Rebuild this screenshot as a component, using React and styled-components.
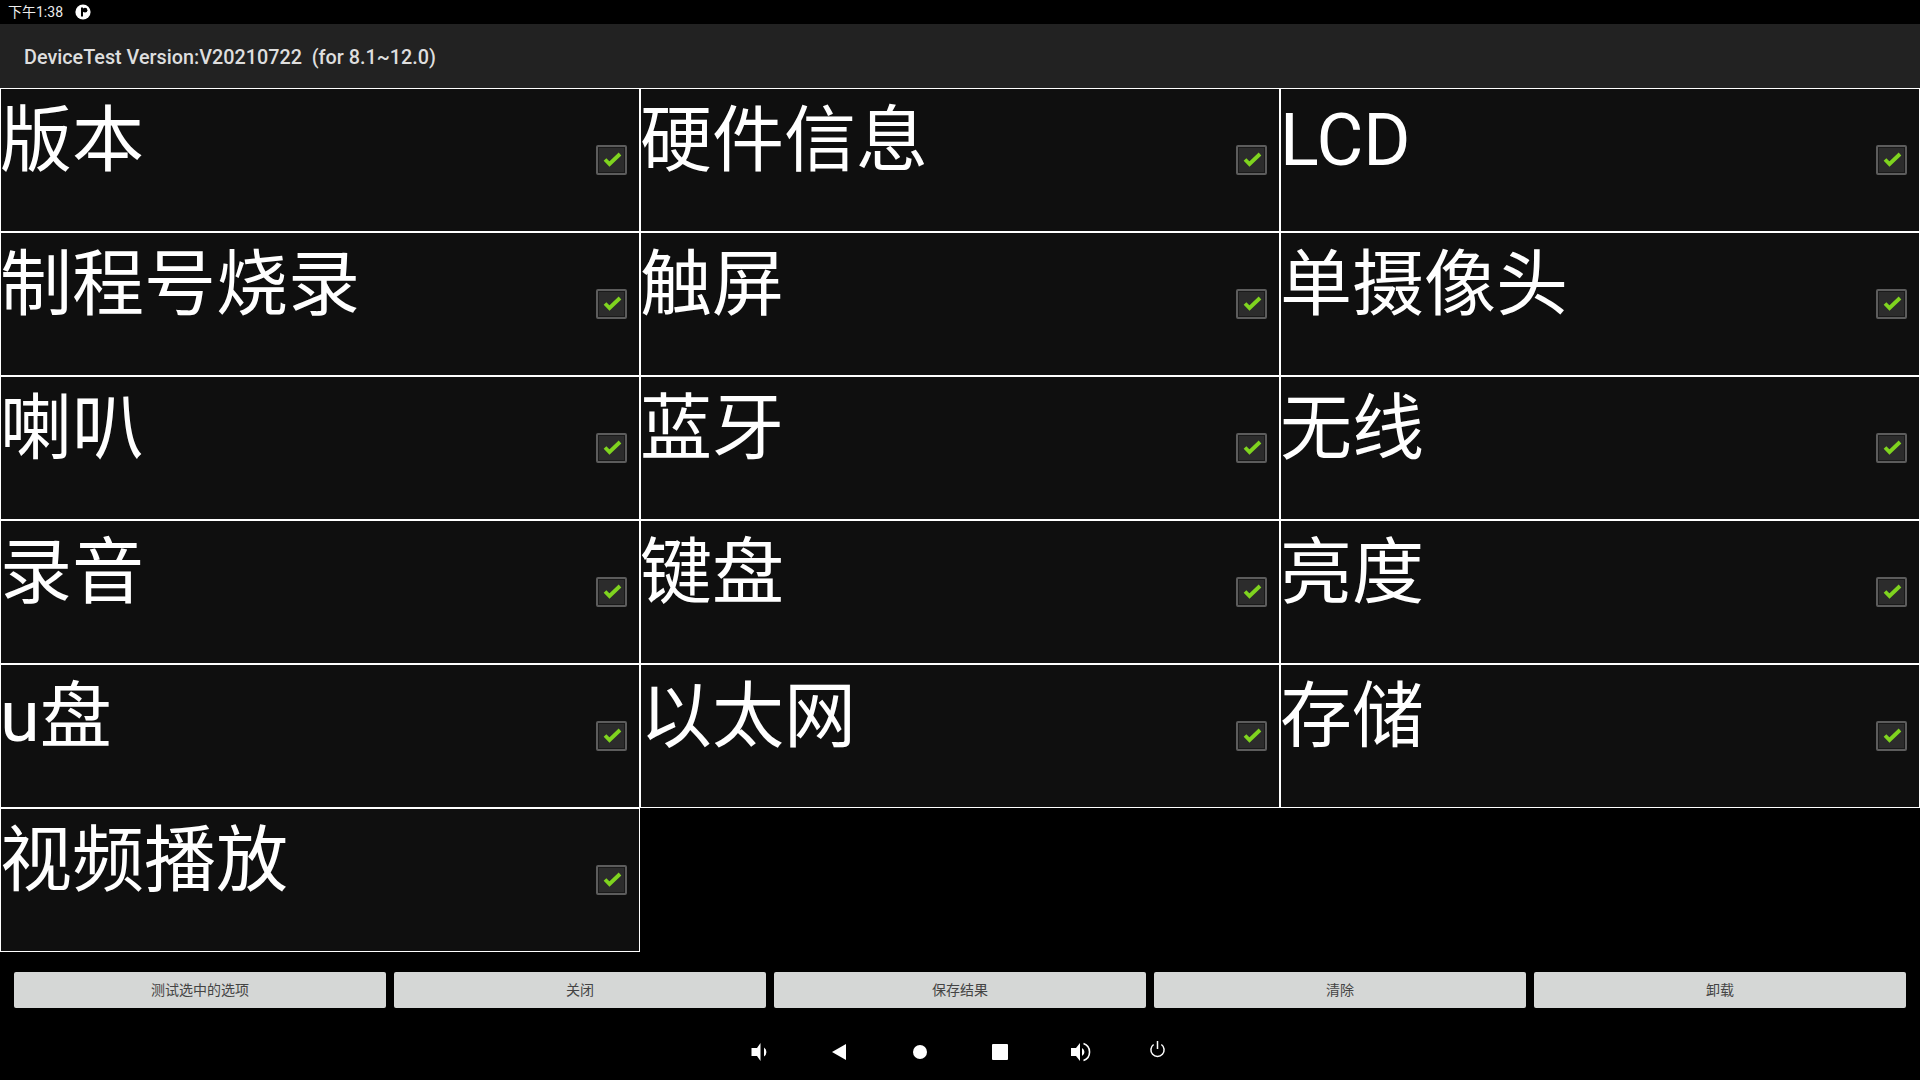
import styled, { createGlobalStyle } from 'styled-components';

const items = [
  '版本', '硬件信息', 'LCD',
  '制程号烧录', '触屏', '单摄像头',
  '喇叭', '蓝牙', '无线',
  '录音', '键盘', '亮度',
  'u盘', '以太网', '存储',
  '视频播放',
];

const actions = ['测试选中的选项', '关闭', '保存结果', '清除', '卸载'];

function App() {
  return (
    <Screen>
      <GlobalStyle />
      <StatusBar>
        <StatusTime>下午1:38</StatusTime>
        <svg width="16" height="16" viewBox="0 0 16 16">
          <circle cx="8" cy="8" r="7.6" fill="#fff" />
          <path d="M7 3.5v9" stroke="#000" strokeWidth="2" />
          <circle cx="10" cy="6.2" r="2.4" fill="#000" />
        </svg>
      </StatusBar>
      <TitleBar>{'DeviceTest Version:V20210722  (for 8.1~12.0)'}</TitleBar>
      <TestGrid>
        {items.map((name) => (
          <TestCell key={name}>
            <TestName>{name}</TestName>
            <CheckBox>
              <svg width="20" height="16" viewBox="0 0 20 16">
                <path d="M3 7.5L7.5 12L18 2" fill="none" stroke="#7fd41f" strokeWidth="3.8" />
              </svg>
            </CheckBox>
          </TestCell>
        ))}
      </TestGrid>
      <ActionRow>
        {actions.map((label) => (
          <ActionButton key={label}>{label}</ActionButton>
        ))}
      </ActionRow>
      <NavBar>
        <NavSlot>
          <svg width="24" height="24" viewBox="0 0 24 24" fill="#fff">
            <path d="M3.5 8H9L12.5 3v18L9 16H3.5z" />
            <path d="M16 7.5a5.4 5.4 0 0 1 0 9z" />
          </svg>
        </NavSlot>
        <NavSlot>
          <svg width="24" height="24" viewBox="0 0 24 24" fill="#fff">
            <path d="M4 12L18 4v16z" />
          </svg>
        </NavSlot>
        <NavSlot>
          <svg width="24" height="24" viewBox="0 0 24 24" fill="#fff">
            <circle cx="12" cy="12" r="7" />
          </svg>
        </NavSlot>
        <NavSlot>
          <svg width="24" height="24" viewBox="0 0 24 24" fill="#fff">
            <rect x="4" y="4" width="16" height="16" rx="1" />
          </svg>
        </NavSlot>
        <NavSlot>
          <svg width="24" height="24" viewBox="0 0 24 24" fill="#fff">
            <path d="M3 8h5L12 3v18l-4-5H3z" />
            <path d="M14 8a4.5 4.5 0 0 1 0 8z" />
            <path d="M15.5 3.5a9 9 0 0 1 0 17" fill="none" stroke="#fff" strokeWidth="1.6" />
          </svg>
        </NavSlot>
        <NavSlot>
          <svg width="24" height="24" viewBox="0 0 24 24" fill="none" stroke="#fff" strokeWidth="1.5">
            <path d="M9.5 1v8" />
            <path d="M5.6 4.5a6.6 6.6 0 1 0 7.8 0" />
          </svg>
        </NavSlot>
      </NavBar>
    </Screen>
  );
}

const GlobalStyle = createGlobalStyle`
  html, body {
    margin: 0;
    padding: 0;
    background: #000;
  }
`;

const Screen = styled.div`
  width: 1920px;
  height: 1080px;
  overflow: hidden;
  display: flex;
  flex-direction: column;
  background: #000;
  font-family: Roboto, "Noto Sans CJK SC", sans-serif;
`;

const StatusBar = styled.div`
  height: 24px;
  padding-left: 8px;
  display: flex;
  align-items: center;
  gap: 12px;
  background: #000;
  color: #eee;
`;

const StatusTime = styled.span`
  font-size: 14px;
  line-height: 24px;
`;

const TitleBar = styled.div`
  height: 64px;
  padding: 2px 0 0 24px;
  box-sizing: border-box;
  display: flex;
  align-items: center;
  white-space: pre;
  background: #222;
  color: #dedede;
  font-size: 19.8px;
  font-weight: 500;
`;

const TestGrid = styled.div`
  display: grid;
  grid-template-columns: repeat(3, 640px);
  grid-auto-rows: 144px;
  height: 864px;
`;

const TestCell = styled.div`
  box-sizing: border-box;
  position: relative;
  border: 1px solid #fff;
  background: #0f0f0f;
`;

const TestName = styled.div`
  margin-left: -1px;
  color: #fff;
  font-size: 72px;
  line-height: 104px;
`;

const CheckBox = styled.div`
  position: absolute;
  top: 56px;
  right: 12px;
  box-sizing: border-box;
  width: 31px;
  height: 30px;
  display: flex;
  align-items: center;
  justify-content: center;
  border: 2px solid #5c5c5c;
  border-radius: 2px;
  background: #2c2c2c;
  box-shadow: inset 0 0 0 1px #1a1a1a;
`;

const ActionRow = styled.div`
  display: flex;
  gap: 8px;
  padding: 20px 14px 0;
`;

const ActionButton = styled.button`
  width: 372px;
  height: 36px;
  padding: 0 0 2px;
  border: 0;
  border-radius: 2px;
  background: #d5d7d6;
  color: #444;
  font-family: inherit;
  font-size: 14px;
`;

const NavBar = styled.div`
  flex: 1;
  padding-top: 16px;
  display: flex;
  justify-content: center;
  align-items: center;
`;

const NavSlot = styled.div`
  width: 80px;
  display: flex;
  justify-content: center;
`;

export default App;
